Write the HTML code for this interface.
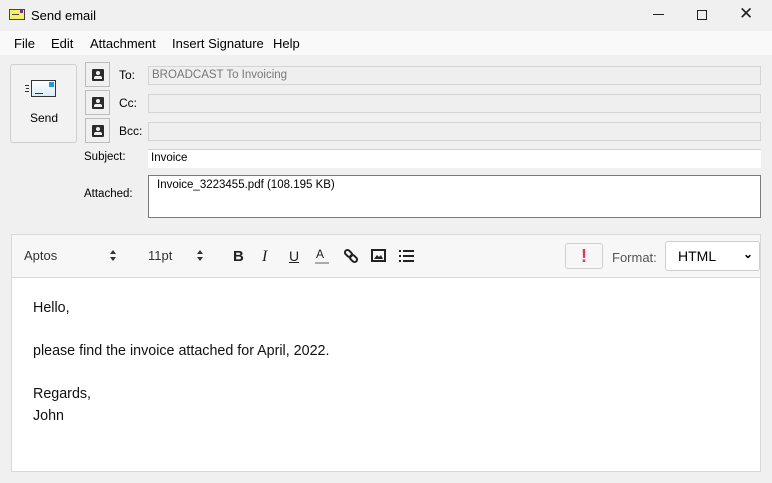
<!DOCTYPE html>
<html><head><style>
*{margin:0;padding:0;box-sizing:border-box}
body{width:772px;height:483px;overflow:hidden;background:#f0f0f0;font-family:"Liberation Sans",sans-serif;font-size:12px;color:#000;position:relative}
.a{position:absolute}
.fld{position:absolute;left:148px;width:613px;height:19px;border:1px solid #d4d4d4;background:#efefef}
.cb{position:absolute;left:85px;width:25px;height:25px;border:1px solid #bcbcbc;background:#f0f0f0}
.cb i{position:absolute;left:6px;top:6px;width:12px;height:12px;background:#2b2b2b;border-radius:1px}
.cb i:before{content:"";position:absolute;left:4px;top:2px;width:4px;height:4px;border-radius:50%;background:#f0f0f0}
.cb i:after{content:"";position:absolute;left:2px;top:7px;width:8px;height:3px;border-radius:2px 2px 0 0;background:#f0f0f0}
.lbl{position:absolute;font-size:12px}
.tb{position:absolute;top:248px;font-size:14px;color:#333}
.sp{position:absolute;top:250px;width:6px;height:12px}
.sp:before{content:"";position:absolute;left:0;top:0;border:3px solid transparent;border-bottom:4px solid #333;border-top:0}
.sp:after{content:"";position:absolute;left:0;top:7px;border:3px solid transparent;border-top:4px solid #333;border-bottom:0}
</style></head><body>
<div class="a" style="left:0;top:0;width:772px;height:30px;background:#f0f0f0"></div>
<div class="a" style="left:9px;top:9px;width:16px;height:11px;background:#f7ef6a;border:1px solid #444"></div>
<div class="a" style="left:12px;top:14px;width:7px;height:1px;background:#444"></div>
<div class="a" style="left:20px;top:10px;width:3px;height:3px;background:#7a2a8a"></div>
<div class="a" style="left:31px;top:8px;font-size:13px">Send email</div>
<div class="a" style="left:653px;top:14px;width:11px;height:1px;background:#222"></div>
<div class="a" style="left:697px;top:10px;width:10px;height:10px;border:1px solid #222"></div>
<div class="a" style="left:739px;top:4px;font-size:17px;color:#222">✕</div>
<div class="a" style="left:0;top:31px;width:772px;height:24px;background:#f9f9f9"></div>
<div class="a" style="left:14px;top:36px;font-size:13px">File</div>
<div class="a" style="left:51px;top:36px;font-size:13px">Edit</div>
<div class="a" style="left:90px;top:36px;font-size:13px">Attachment</div>
<div class="a" style="left:172px;top:36px;font-size:13px">Insert Signature</div>
<div class="a" style="left:273px;top:36px;font-size:13px">Help</div>

<div class="a" style="left:10px;top:64px;width:67px;height:79px;border:1px solid #cfcfcf;border-radius:3px;background:#f2f2f2"></div>
<div class="a" style="left:31px;top:80px;width:25px;height:17px;border:1px solid #333;background:linear-gradient(#fff,#d8eef8)"></div>
<div class="a" style="left:49px;top:82px;width:5px;height:5px;background:#1e9ae0"></div>
<div class="a" style="left:35px;top:93px;width:8px;height:1px;background:#333"></div>
<div class="a" style="left:25px;top:85px;width:4px;height:1px;background:#333"></div>
<div class="a" style="left:26px;top:88px;width:3px;height:1px;background:#333"></div>
<div class="a" style="left:25px;top:91px;width:4px;height:1px;background:#333"></div>
<div class="a" style="left:30px;top:111px;font-size:12px">Send</div>

<div class="cb" style="top:62px"><i></i></div>
<div class="cb" style="top:90px"><i></i></div>
<div class="cb" style="top:118px"><i></i></div>
<div class="lbl" style="left:119px;top:68px">To:</div>
<div class="lbl" style="left:119px;top:96px">Cc:</div>
<div class="lbl" style="left:119px;top:124px">Bcc:</div>
<div class="fld" style="top:66px;color:#777;padding:2px 3px;font-size:11.5px">BROADCAST To Invoicing</div>
<div class="fld" style="top:94px"></div>
<div class="fld" style="top:122px"></div>
<div class="lbl" style="left:84px;top:151px;font-size:11.5px">Subject:</div>
<div class="fld" style="top:149px;background:#fff;border:none;border-top:1px solid #d0d0d0;padding:2px 3px;font-size:11.5px">Invoice</div>
<div class="lbl" style="left:84px;top:188px;font-size:11.5px">Attached:</div>
<div class="a" style="left:148px;top:175px;width:613px;height:43px;border:1px solid #7a7a7a;background:#fff;padding:3px 8px;font-size:11.5px">Invoice_3223455.pdf (108.195 KB)</div>

<div class="a" style="left:11px;top:234px;width:750px;height:238px;border:1px solid #d8d8d8;background:#fff"></div>
<div class="a" style="left:12px;top:235px;width:748px;height:43px;background:#f7f7f7;border-bottom:1px solid #dcdcdc"></div>
<div class="tb" style="left:24px;font-size:13px">Aptos</div>
<div class="sp" style="left:110px"></div>
<div class="tb" style="left:148px;font-size:13px">11pt</div>
<div class="sp" style="left:197px"></div>
<div class="tb" style="left:233px;font-weight:bold;font-size:15px;color:#222">B</div>
<div class="tb" style="left:262px;font-style:italic;font-family:'Liberation Serif',serif;font-size:16px;color:#222">I</div>
<div class="tb" style="left:289px;text-decoration:underline;font-size:14px;color:#222">U</div>
<div class="tb" style="left:316px;font-size:12px;color:#222;top:247px">A</div>
<div class="a" style="left:315px;top:262px;width:14px;height:2px;background:#aaa"></div>
<svg class="a" style="left:343px;top:248px" width="16" height="16" viewBox="0 0 16 16"><g fill="none" stroke="#222" stroke-width="2"><rect x="1.5" y="3" width="8" height="5" rx="2.5" transform="rotate(45 5.5 5.5)"/><rect x="6.5" y="8" width="8" height="5" rx="2.5" transform="rotate(45 10.5 10.5)"/></g></svg>
<svg class="a" style="left:371px;top:249px" width="15" height="13"><rect x="1" y="1" width="13" height="11" fill="none" stroke="#222" stroke-width="2"/><path d="M3 10l3-4 2 2 2-2 2 4z" fill="#222"/></svg>
<svg class="a" style="left:399px;top:249px" width="15" height="14"><g fill="#222"><rect x="0" y="1" width="2" height="2"/><rect x="0" y="6" width="2" height="2"/><rect x="0" y="11" width="2" height="2"/><rect x="4" y="1" width="11" height="2"/><rect x="4" y="6" width="11" height="2"/><rect x="4" y="11" width="11" height="2"/></g></svg>
<div class="a" style="left:565px;top:243px;width:38px;height:26px;border:1px solid #d0d0d0;border-radius:3px;background:#f7f7f7;color:#e8335a;font-weight:bold;font-size:18px;text-align:center;line-height:24px">!</div>
<div class="a" style="left:612px;top:250px;font-size:13px;color:#555">Format:</div>
<div class="a" style="left:665px;top:241px;width:95px;height:30px;border:1px solid #cfcfcf;border-radius:3px;background:#fff;padding:6px 12px;font-size:14px">HTML<span style="position:absolute;right:6px;top:5px;font-size:12px;font-weight:bold">⌄</span></div>

<div class="a" style="left:33px;top:298px;font-size:14.3px;line-height:21.5px;color:#111">Hello,<br><br>please find the invoice attached for April, 2022.<br><br>Regards,<br>John</div>
</body></html>
